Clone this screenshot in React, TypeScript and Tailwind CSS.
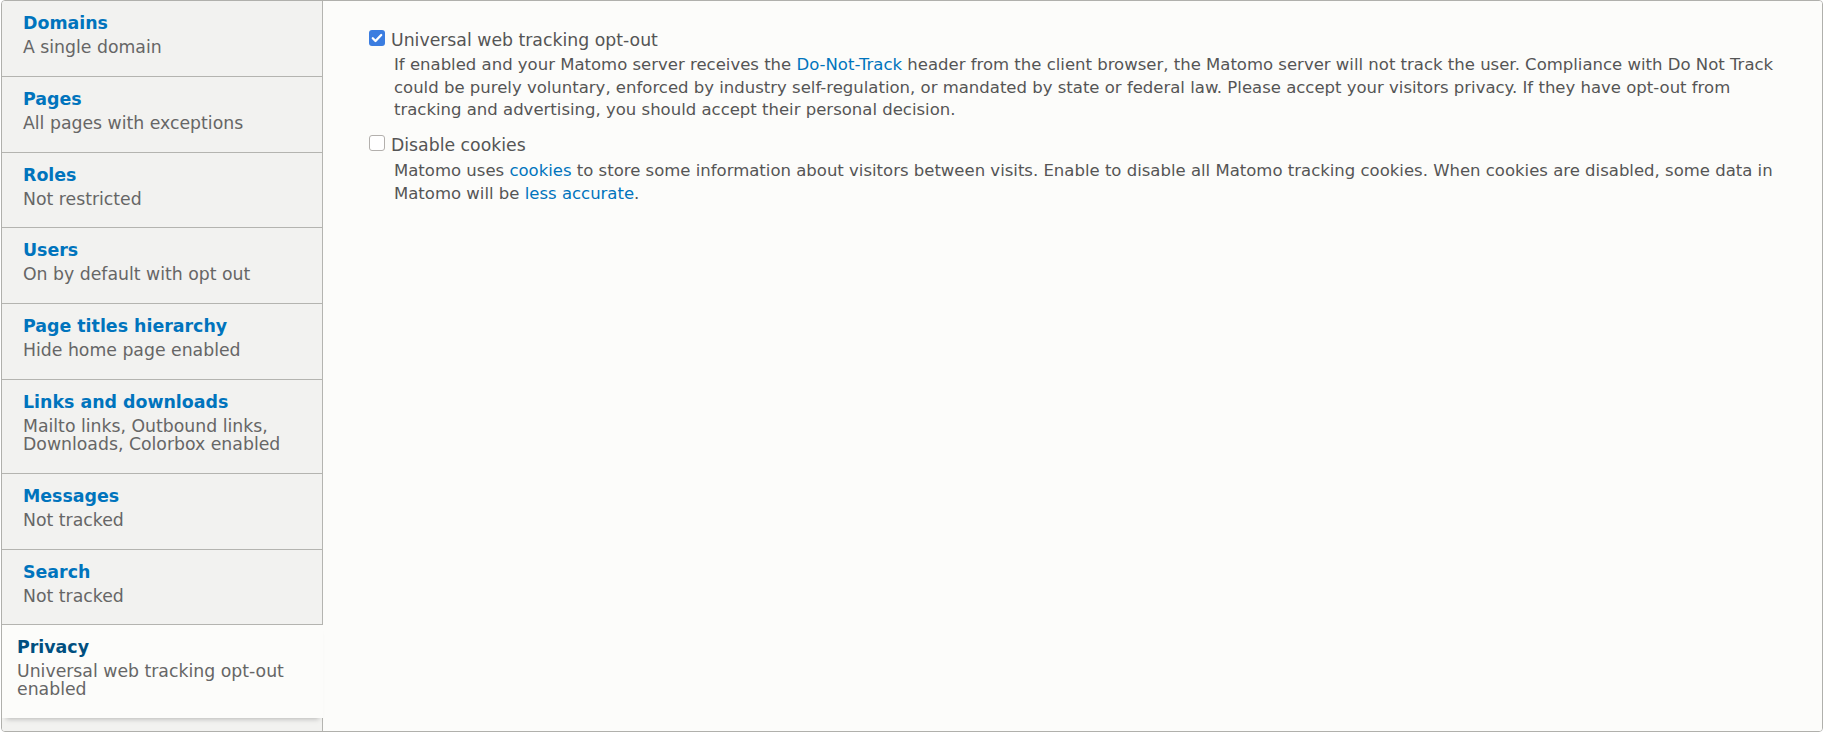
import React from 'react';

type Tab = { title: string; summary: string; active?: boolean };

const tabs: Tab[] = [
  { title: 'Domains', summary: 'A single domain' },
  { title: 'Pages', summary: 'All pages with exceptions' },
  { title: 'Roles', summary: 'Not restricted' },
  { title: 'Users', summary: 'On by default with opt out' },
  { title: 'Page titles hierarchy', summary: 'Hide home page enabled' },
  { title: 'Links and downloads', summary: 'Mailto links, Outbound links, Downloads, Colorbox enabled' },
  { title: 'Messages', summary: 'Not tracked' },
  { title: 'Search', summary: 'Not tracked' },
  { title: 'Privacy', summary: 'Universal web tracking opt-out enabled', active: true },
];

const Checkbox: React.FC<{ checked?: boolean }> = ({ checked }) =>
  checked ? (
    <span className="mt-[2px] flex h-[16px] w-[16px] shrink-0 items-center justify-center rounded-[3px] bg-[#3b7de0]">
      <svg viewBox="0 0 16 16" className="h-[16px] w-[16px]">
        <path d="M3.8 8.3l2.7 2.7 5.7-6" fill="none" stroke="#fff" strokeWidth="2.3" strokeLinecap="round" strokeLinejoin="round" />
      </svg>
    </span>
  ) : (
    <span className="mt-[2px] h-[16px] w-[16px] shrink-0 rounded-[3px] border border-[#b3b0ad] bg-white" />
  );

const A: React.FC<{ children: React.ReactNode }> = ({ children }) => (
  <a href="#" className="text-[#0074bd]">{children}</a>
);

const App: React.FC = () => {
  return (
    <div className="h-[732px] w-[1824px] bg-white font-['DejaVu_Sans',sans-serif]">
      <div className="ml-[1px] flex h-[732px] w-[1822px] overflow-hidden rounded-[4px] border border-[#b0b0ac]">
        {/* tab menu */}
        <div className="flex w-[321px] shrink-0 flex-col border-r border-[#b4b4b0] bg-[#f2f2f0]">
          {tabs.map((tab, idx) =>
            tab.active ? (
              <div
                key={idx}
                className="relative z-10 -mr-px border-t border-[#b4b4b0] bg-[#fcfcfa] pt-[10px] pb-[19.8px] pl-[15px] pr-[15px] shadow-[0_5px_5px_-4px_rgba(0,0,0,0.25)]"
              >
                <div className="text-[17.4px] font-bold leading-[24px] text-[#004f80]">{tab.title}</div>
                <div className="mt-[3px] text-[17.3px] leading-[18px] text-[#666]">{tab.summary}</div>
              </div>
            ) : (
              <div
                key={idx}
                className="border-t border-[#b4b4b0] pt-[10px] pb-[19.8px] pl-[21px] pr-[15px] first:border-t-0"
              >
                <div className="text-[17.4px] font-bold leading-[24px] text-[#0074bd]">{tab.title}</div>
                <div className="mt-[3px] text-[17.3px] leading-[18px] text-[#666]">{tab.summary}</div>
              </div>
            )
          )}
          <div className="flex-1" />
        </div>

        {/* pane */}
        <div className="flex-1 bg-[#fcfcfa] pt-[27px] pl-[46px] pr-[40px] text-[#555]">
          <div>
            <label className="flex items-start gap-[6px]">
              <Checkbox checked />
              <span className="text-[17.3px] leading-[24px]">Universal web tracking opt-out</span>
            </label>
            <div className="ml-[25px] mt-[2px] text-[16.5px] leading-[22.7px]">
              If enabled and your Matomo server receives the <A>Do-Not-Track</A> header from the client browser, the
              Matomo server will not track the user. Compliance with Do Not Track could be purely voluntary, enforced
              by industry self-regulation, or mandated by state or federal law. Please accept your visitors privacy.
              If they have opt-out from tracking and advertising, you should accept their personal decision.
            </div>
          </div>
          <div className="mt-[11px]">
            <label className="flex items-start gap-[6px]">
              <Checkbox />
              <span className="text-[17.3px] leading-[24px]">Disable cookies</span>
            </label>
            <div className="ml-[25px] mt-[3px] text-[16.5px] leading-[22.7px]">
              Matomo uses <A>cookies</A> to store some information about visitors between visits. Enable to disable
              all Matomo tracking cookies. When cookies are disabled, some data in Matomo will be{' '}
              <A>less accurate</A>.
            </div>
          </div>
        </div>
      </div>
    </div>
  );
};

export default App;
